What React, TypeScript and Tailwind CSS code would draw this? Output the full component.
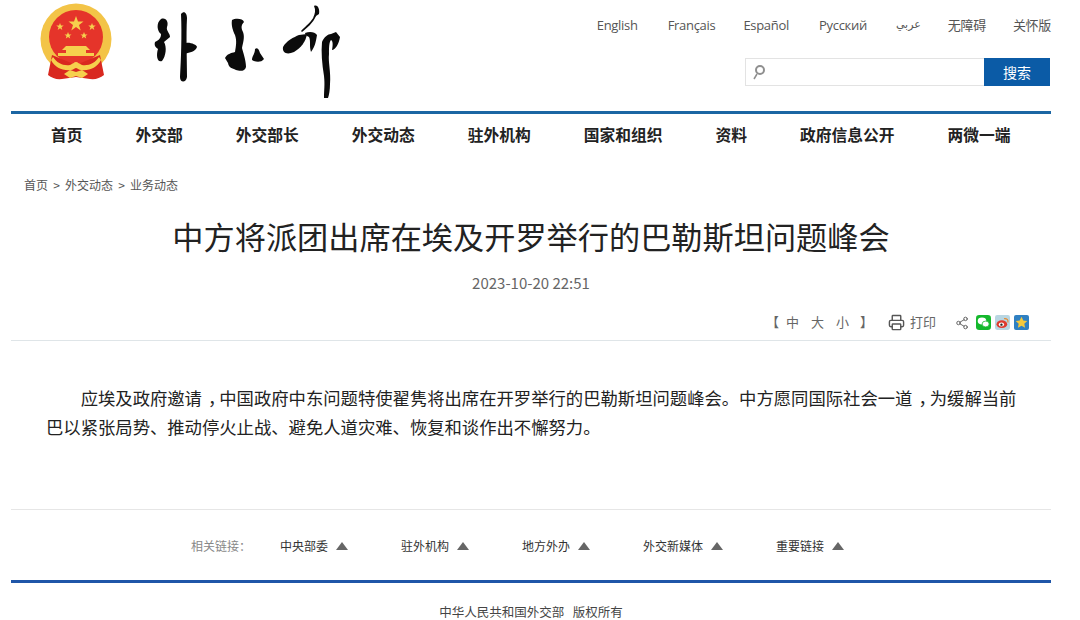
import { Printer, Share2 } from "lucide-react";

const sans = "font-['Noto_Sans_CJK_SC','Noto_Sans',sans-serif]";

const languages = [
  { label: "English", gap: "" },
  { label: "Français", gap: "ml-[30px]" },
  { label: "Español", gap: "ml-[28px]" },
  { label: "Русский", gap: "ml-[30px]" },
  { label: "عربي", gap: "ml-[29px]" },
  { label: "无障碍", gap: "ml-[27px]" },
  { label: "关怀版", gap: "ml-[27px]" },
];
const navItems = ["首页", "外交部", "外交部长", "外交动态", "驻外机构", "国家和组织", "资料", "政府信息公开", "两微一端"];
const relatedLinks = ["中央部委", "驻外机构", "地方外办", "外交新媒体", "重要链接"];

const Emblem = () => (
  <svg width="74" height="78" viewBox="0 0 74 78" className="shrink-0">
    <circle cx="36" cy="36" r="35.5" fill="#f3c447" />
    <circle cx="36" cy="34" r="27" fill="#e5342a" />
    <path d="M12 52 L8 72 Q14 77 22 76 L36 74 L50 76 Q58 77 64 72 L60 52 L36 62Z" fill="#d9281f" />
    <path d="M36 13l2 5.5h5.5l-4.5 3.4 1.7 5.6-4.7-3.4-4.7 3.4 1.7-5.6-4.5-3.4H34z" fill="#f6d04d" />
    <path d="M20 20l1 2.6h2.7l-2.2 1.6.8 2.7-2.3-1.6-2.3 1.6.8-2.7-2.2-1.6H19z" fill="#f6d04d" />
    <path d="M52 20l1 2.6h2.7l-2.2 1.6.8 2.7-2.3-1.6-2.3 1.6.8-2.7-2.2-1.6H51z" fill="#f6d04d" />
    <path d="M28 29l1 2.4h2.5l-2 1.5.7 2.5-2.2-1.5-2.2 1.5.7-2.5-2-1.5H27z" fill="#f6d04d" />
    <path d="M44 29l1 2.4h2.5l-2 1.5.7 2.5-2.2-1.5-2.2 1.5.7-2.5-2-1.5H43z" fill="#f6d04d" />
    <path d="M26 43h20l4 4h-4v3h8v3H18v-3h8v-3h-4z" fill="#f6d04d" />
    <path d="M13 54c4 6 10 9 17 8 3-1 4-3 6-3s3 2 6 3c7 1 13-2 17-8l2 3c-4 8-12 11-20 10-2 0-4-2-5-2s-3 2-5 2c-8 1-16-2-20-10z" fill="#f6d04d" />
    <path d="M24 71l6-4 6 2 6-2 6 4-6 4-6-2-6 2z" fill="#f6d04d" />
  </svg>
);

// the calligraphy of the masthead, traced roughly as a picture
const Calligraphy = () => (
  <svg width="200" height="105" viewBox="0 0 200 105" className="shrink-0" fill="#0b0b0b">
    <path d="M13 19C18 17 21 22 19 27C18 31 22 33 22 37L16 42C19 47 18 56 14 61C9 63 8 55 10 49C7 47 6 45 7 42C11 40 13 38 13 34C9 31 8 23 13 19Z" />
    <path d="M33 14C36 10 39 13 39 18C38 35 39 60 39 77C38 83 32 83 32 77C33 60 34 35 33 14Z" />
    <path d="M38 43C42 42 49 45 49 47C47 52 42 52 37 54Z" />
    <path d="M84 20C87 18 95 18 96 22C93 25 93 28 95 32C97 37 95 43 94 48C95 52 98 60 98 67C97 72 91 71 88 70C84 68 81 68 80 63L77 58C79 54 83 53 87 52C88 46 89 41 87 35C85 31 83 25 84 20Z" />
    <path d="M107 49C110 47 111 50 112 53L116 59C113 63 107 62 104 60C104 56 107 54 107 49Z" />
    <path d="M135 47C138 41 146 37 151 35L159 34C158 41 153 48 146 52C139 55 134 53 135 47Z" />
    <path d="M153 31C158 26 164 21 167 15L168 16C165 23 159 28 154 32Z" />
    <path d="M166 6C170 4 172 10 171 14L165 18C167 14 168 10 166 6Z" />
    <path d="M157 33C162 31 167 32 169 35C168 41 167 47 163 52C161 46 163 41 161 37C159 36 157 35 157 33Z" />
    <path d="M174 42C176 37 180 34 183 34L188 32L192 37C191 44 187 50 184 50C185 45 185 41 183 40C181 42 181 48 181 54C180 62 183 72 182 84C182 90 181 95 180 98L176 98C176 90 177 85 176 76C174 64 173 52 174 42Z" />
  </svg>
);

const SearchBar = () => (
  <div className="mr-px flex h-7 w-[305px] border border-[#e3e3e3]">
    <div className="flex flex-1 items-center pl-[6px]">
      <svg width="14" height="16" viewBox="0 0 14 16" fill="none" stroke="#8f8f8f">
        <circle cx="8" cy="6" r="4" strokeWidth="2" />
        <path d="M5 10L2 15" strokeWidth="1.5" />
      </svg>
    </div>
    <div className="-my-px -mr-px flex w-[66px] items-center justify-center bg-[#0b5ba6] text-sm text-white">搜索</div>
  </div>
);

const WeChat = () => (
  <svg width="15" height="15" viewBox="0 0 14 14">
    <rect width="14" height="14" rx="3" fill="#14b82c" />
    <ellipse cx="5.6" cy="5.6" rx="4" ry="3.2" fill="#fff" />
    <ellipse cx="9" cy="8.4" rx="3.3" ry="2.7" fill="#fff" stroke="#14b82c" strokeWidth="0.7" />
  </svg>
);

const Weibo = () => (
  <svg width="15" height="15" viewBox="0 0 14 14">
    <rect width="14" height="14" rx="2" fill="#b9d6e2" />
    <ellipse cx="6.4" cy="8.6" rx="5" ry="3.6" fill="#df3a2d" />
    <ellipse cx="6" cy="8.8" rx="2.5" ry="1.9" fill="#fff" />
    <circle cx="6" cy="9" r="1.1" fill="#222" />
    <path d="M8.5 3.4C11 3 12.6 4.6 12 7" fill="none" stroke="#e88a2e" strokeWidth="1.1" />
  </svg>
);

const Qzone = () => (
  <svg width="15" height="15" viewBox="0 0 15 15">
    <rect width="15" height="15" rx="2" fill="#2f80c2" />
    <path d="M7.5 1.8l1.8 3.7 4 .5-3 2.8.8 4-3.6-2-3.6 2 .8-4-3-2.8 4-.5z" fill="#f5c93c" />
  </svg>
);

// the reference's font sets the full-width comma in the middle of its cell
const Comma = () => <span className="ml-[6px] tracking-[-6px]">，</span>;

const App = () => (
  <div className={`h-[620px] w-[1080px] overflow-hidden bg-white pl-[11px] text-[#333] ${sans}`}>
    <div className="w-[1040px]">
      <header className="flex h-[111px] items-start justify-between">
        <div className="flex items-start pl-[29px] pt-[3px]">
          <Emblem />
          <div className="ml-[34px] -mt-[3px]">
            <Calligraphy />
          </div>
        </div>
        <div className="flex flex-col items-end pt-[15px]">
          <div className="flex h-5 items-center text-[13px] leading-5 text-[#555]">
            {languages.map((lang) => (
              <span
                key={lang.label}
                className={
                  lang.gap +
                  (lang.label === "عربي"
                    ? " font-['DejaVu_Sans'] text-[11px]"
                    : " font-['Open_Sans','Noto_Sans_CJK_SC',sans-serif] tracking-[-0.3px]")
                }
              >
                {lang.label}
              </span>
            ))}
          </div>
          <div className="mt-[23px]">
            <SearchBar />
          </div>
        </div>
      </header>

      <nav className="flex h-[44px] items-center gap-[53px] border-t-[3px] border-[#1b66a3] pl-10 text-[15.75px] leading-none font-bold text-[#222]">
        {navItems.map((item) => (
          <span key={item}>{item}</span>
        ))}
      </nav>

      <div className="mt-5 pl-[13px] text-xs leading-5 [word-spacing:2.5px] text-[#555]">首页 &gt; 外交动态 &gt; 业务动态</div>

      <h1 className="mt-[19px] text-center text-[31.2px] leading-[44px] font-normal text-[#222]">
        中方将派团出席在埃及开罗举行的巴勒斯坦问题峰会
      </h1>

      <p className="mt-[15px] text-center text-[15px] leading-5 text-[#666]">2023-10-20 22:51</p>

      <div className="mt-[17px] flex h-[31px] items-start justify-end border-b border-[#dfe5e8] pt-[2px] pr-[22px] text-[13px] leading-5 text-[#666]">
        <span className="flex gap-[11px]">
          <span>【</span>
          <span className="-ml-[4px]">中</span>
          <span className="ml-[1px]">大</span>
          <span className="ml-[1px]">小</span>
          <span>】</span>
        </span>
        <Printer size={17} strokeWidth={2} className="ml-[15px] mt-[2px] text-[#555]" />
        <span className="ml-[5px]">打印</span>
        <Share2 size={14} strokeWidth={1.5} className="ml-[19px] mt-[4px] text-[#555]" />
        <span className="ml-[7px] mt-[3px] flex items-center gap-[4px]">
          <WeChat />
          <Weibo />
          <Qzone />
        </span>
      </div>

      <article className="mt-[42px] h-[127px] border-b border-[#e6e6e6] pr-[30px] pl-[35px] text-[17.33px] leading-[29px] text-[#222]">
        <p className="indent-[2em]">
          应埃及政府邀请
          <Comma />
          中国政府中东问题特使翟隽将出席在开罗举行的巴勒斯坦问题峰会。中方愿同国际社会一道
          <Comma />
          为缓解当前
          <br />
          巴以紧张局势、推动停火止战、避免人道灾难、恢复和谈作出不懈努力。
        </p>
      </article>

      <div className="mt-[26px] flex h-5 items-center pl-[180px] text-xs leading-5 text-[#333]">
        <span className="mr-[29px] text-[#888]">相关链接：</span>
        <div className="flex gap-[53px]">
          {relatedLinks.map((link) => (
            <span key={link} className="flex items-center gap-2">
              {link}
              <span className="h-0 w-0 border-x-[6px] border-b-[8px] border-x-transparent border-b-[#666]" />
            </span>
          ))}
        </div>
      </div>

      <div className="mt-6 h-[3px] bg-[#1f56a8]" />

      <p className="mt-[19px] text-center text-[12.5px] leading-5 text-[#444]">中华人民共和国外交部&nbsp;&nbsp;&nbsp;版权所有</p>
    </div>
  </div>
);

export default App;
